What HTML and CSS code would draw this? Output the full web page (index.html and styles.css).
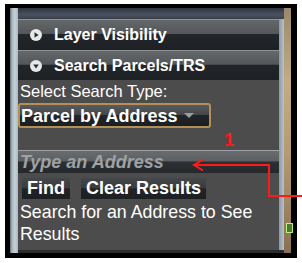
FILE: index.html
```html
<!DOCTYPE html>
<html>
<head>
<meta charset="utf-8">
<link rel="stylesheet" href="styles.css">
</head>
<body>
<div class="frame">
  <div class="lstrip"></div>
  <div class="center">
    <div class="maptop"></div>
    <div class="mid">
      <div class="panel">
        <div class="header">
          <span class="icon"><svg width="12" height="12" viewBox="0 0 12 12"><circle cx="6" cy="6" r="6" fill="#e8e8e8"/><path d="M4.5 3.2 L8.6 6 L4.5 8.8 Z" fill="#2a2d30"/></svg></span>
          <span class="htext">Layer Visibility</span>
        </div>
        <div class="header">
          <span class="icon"><svg width="12" height="12" viewBox="0 0 12 12"><circle cx="6" cy="6" r="6" fill="#e8e8e8"/><path d="M3.2 4.6 L8.8 4.6 L6 8.4 Z" fill="#2a2d30"/></svg></span>
          <span class="htext">Search Parcels/TRS</span>
        </div>
        <div class="content">
          <div class="label">Select Search Type:</div>
          <div class="select"><span>Parcel by Address</span><span class="caret"></span></div>
          <div class="annot"><span class="num">1</span></div>
          <div class="input">Type an Address</div>
          <div class="buttons">
            <span class="btn">Find</span>
            <span class="btn">Clear Results</span>
          </div>
          <div class="msg">Search for an Address to See Results</div>
        </div>
      </div>
      <div class="rstrip"></div>
    </div>
    <div class="mapbottom"></div>
  </div>
  <div class="tan"><span class="green"></span></div>
  <svg class="arrow" width="120" height="50" viewBox="0 0 120 50">
    <path d="M1 8 L77 8 L77 39 L120 39" fill="none" stroke="#ff1a1a" stroke-width="2"/>
    <path d="M11 2.5 L2 8 L11 13.5" fill="none" stroke="#ff1a1a" stroke-width="2"/>
  </svg>
</div>
</body>
</html>
```
FILE: styles.css
```css
html, body { margin: 0; padding: 0; background: #ffffff; }
body { font-family: "Liberation Sans", Arial, sans-serif; }
.frame {
  position: relative;
  margin: 4px 0 0 5px;
  width: 281px;
  height: 245px;
  border: solid #000;
  border-width: 4px 6px 5px 5px;
  display: flex;
  background: #2c3038;
}
.lstrip {
  width: 8px;
  background: linear-gradient(to right, #5f6e78 0, #a9b6bf 2px, #c8d0d6 5px, #aab7c0 8px);
}
.center { flex: 1; display: flex; flex-direction: column; }
.maptop {
  height: 11px;
  background: linear-gradient(to bottom, #2e3440, #4a5260 60%, #3a404a);
}
.mid { flex: 1; display: flex; }
.mapbottom { height: 3px; background: #2a2c2e; }
.panel {
  flex: 1;
  background: #4c4c4c;
  display: flex;
  flex-direction: column;
}
.rstrip {
  width: 5px;
  background: linear-gradient(to right, #8899a6, #b7c3cb);
}
.tan {
  position: relative;
  width: 7px;
  background: linear-gradient(to bottom, #9a8a6a, #c2ab85 30%, #b49a72 60%, #8a7050);
}
.green {
  position: absolute;
  left: 2px; top: 215px;
  width: 5px; height: 8px;
  border: 1px solid #b8f080;
  background: #507830;
}
.header {
  height: 30px;
  border-top: 1px solid #8f9396;
  background: linear-gradient(to bottom, #65686b 0, #54575a 46%, #22262a 48%, #1d2124 100%);
  display: flex;
  align-items: center;
  padding-left: 12px;
  color: #fff;
  font-weight: bold;
  font-size: 16px;
}
.header + .header { height: 29px; }
.icon { width: 12px; height: 12px; margin-right: 12px; display: flex; }
.htext { line-height: 18px; }
.content {
  padding: 1px 0 0 2px;
  color: #fff;
  font-size: 18px;
}
.label { line-height: 20px; height: 20px; font-size: 16.5px; }
.select {
  margin-top: 2px;
  margin-left: -2px;
  width: 188px;
  height: 21px;
  border: 2px solid #b39156;
  border-radius: 3px;
  background: linear-gradient(to bottom, #585b5e 0, #45484b 45%, #22262a 50%, #1b1f22 100%);
  font-weight: bold;
  font-size: 18px;
  display: flex;
  align-items: center;
  padding-left: 1px;
  line-height: 18px;
}
.caret {
  margin-left: 7px;
  width: 0; height: 0;
  border-left: 5px solid transparent;
  border-right: 5px solid transparent;
  border-top: 5px solid #9a9da0;
}
.annot { height: 22px; position: relative; }
.num {
  position: absolute;
  left: 204px; top: 3px;
  color: #ff1a1a;
  font-weight: bold;
  font-size: 18px;
  line-height: 18px;
}
.input {
  margin-left: -2px;
  height: 22px;
  border-top: 1px solid #9ea1a4;
  background: linear-gradient(to bottom, #6a6d70 0, #5c5f62 45%, #2c3034 50%, #25292c 100%);
  color: #9fa1a3;
  font-style: italic;
  font-weight: bold;
  font-size: 18px;
  padding-left: 2px;
  line-height: 22px;
}
.buttons { display: flex; gap: 11px; margin-top: 5px; margin-left: 2px; }
.btn {
  height: 21px;
  line-height: 21px;
  padding: 0 5px;
  font-weight: bold;
  font-size: 18px;
  background: linear-gradient(to bottom, #45484b 0, #3a3d40 45%, #202427 52%, #1c2023 100%);
}
.msg { line-height: 22px; margin-top: 2px; width: 255px; font-size: 17.8px; }
.arrow { position: absolute; left: 182px; top: 149px; }
```
